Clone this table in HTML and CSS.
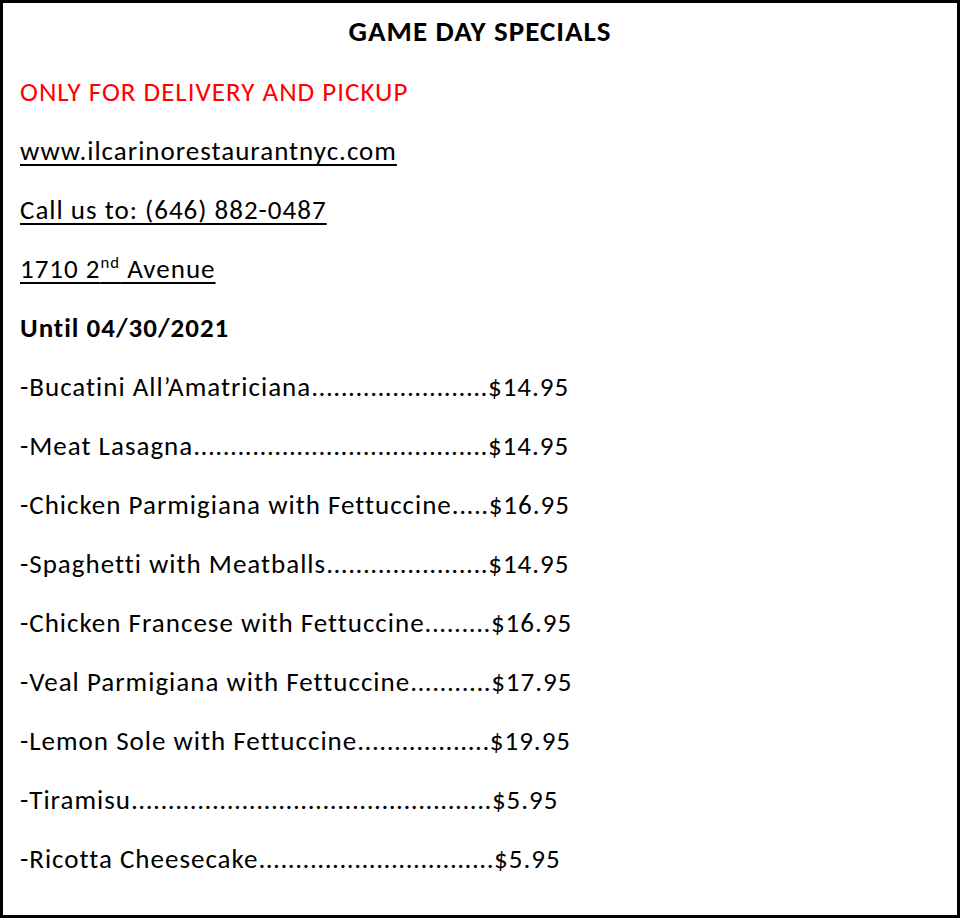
FILE: index.html
```html
<!DOCTYPE html>
<html lang="en">
<head>
<meta charset="utf-8">
<title>Game Day Specials</title>
<link rel="stylesheet" href="styles.css">
</head>
<body>
<div class="page">
  <div class="content">
    <div class="line title">GAME DAY SPECIALS</div>
    <div class="line notice">ONLY FOR DELIVERY AND PICKUP</div>
    <div class="line"><span class="ul">www.ilcarinorestaurantnyc.com</span></div>
    <div class="line"><span class="ul">Call us to: (646) 882-0487</span></div>
    <div class="line"><span class="ul">1710 2<sup>nd</sup> Avenue</span></div>
    <div class="line strong">Until 04/30/2021</div>

    <div class="line item"><span class="name">-Bucatini All’Amatriciana</span><span class="dots">........................</span><span class="price">$14.95</span></div>
    <div class="line item"><span class="name">-Meat Lasagna</span><span class="dots">........................................</span><span class="price">$14.95</span></div>
    <div class="line item"><span class="name">-Chicken Parmigiana with Fettuccine</span><span class="dots">.....</span><span class="price">$16.95</span></div>
    <div class="line item"><span class="name">-Spaghetti with Meatballs</span><span class="dots">......................</span><span class="price">$14.95</span></div>
    <div class="line item"><span class="name">-Chicken Francese with Fettuccine</span><span class="dots">.........</span><span class="price">$16.95</span></div>
    <div class="line item"><span class="name">-Veal Parmigiana with Fettuccine</span><span class="dots">...........</span><span class="price">$17.95</span></div>
    <div class="line item"><span class="name">-Lemon Sole with Fettuccine</span><span class="dots">..................</span><span class="price">$19.95</span></div>
    <div class="line item"><span class="name">-Tiramisu</span><span class="dots">.................................................</span><span class="price">$5.95</span></div>
    <div class="line item"><span class="name">-Ricotta Cheesecake</span><span class="dots">................................</span><span class="price">$5.95</span></div>
  </div>
</div>
</body>
</html>
```
FILE: styles.css
```css
html, body {
  margin: 0;
  padding: 0;
  background: #ffffff;
}

.page {
  box-sizing: border-box;
  width: 960px;
  height: 918px;
  border: 3px solid #000000;
  background: #ffffff;
  overflow: hidden;
}

.content {
  padding-left: 17px;
  font-family: Carlito, Lato, "Open Sans", sans-serif;
  font-size: 27px;
  letter-spacing: 1px;
  font-variant-ligatures: none;
  color: #000000;
}

.line {
  line-height: 59px;
  height: 59px;
  white-space: nowrap;
}

.title {
  text-align: center;
  font-weight: 700;
  font-size: 29px;
  line-height: 57px;
  letter-spacing: 1px;
  padding-right: 17px;
}

.notice {
  color: #ff0000;
}

.ul {
  text-decoration: underline;
  text-decoration-thickness: 1.5px;
  text-underline-offset: 4px;
}

.ul sup {
  font-size: 0.62em;
  line-height: 0;
  vertical-align: 0.62em;
}

.strong {
  font-weight: 700;
}

.item {
  display: flex;
}

.name,
.price {
  flex: 0 0 auto;
}

.dots {
  flex: 0 0 auto;
  letter-spacing: 0.55px;
}
```
